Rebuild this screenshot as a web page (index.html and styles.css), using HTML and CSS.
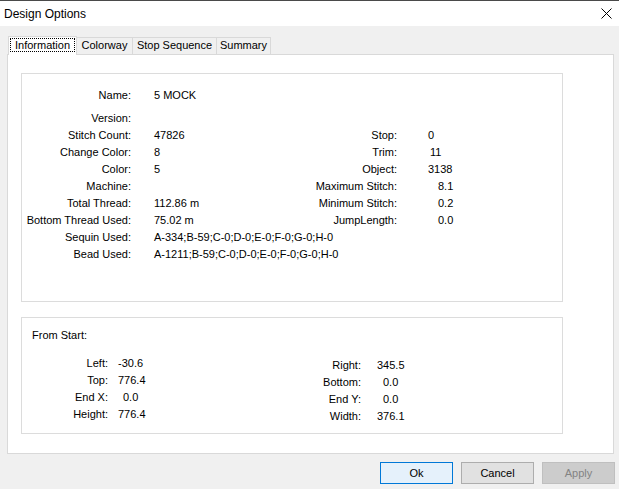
FILE: index.html
```html
<!DOCTYPE html>
<html lang="en">
<head>
    <meta charset="UTF-8">
    <title>Design Options</title>
    <link rel="stylesheet" href="styles.css">
</head>
<body>
    <div class="titlebar">
        <span class="title">Design Options</span>
        <svg class="close" width="11" height="11" viewBox="0 0 11 11">
            <path d="M0.5 0.5 L10.5 10.5 M10.5 0.5 L0.5 10.5" stroke="#000" stroke-width="1" fill="none"/>
        </svg>
    </div>

    <div class="dialog">
        <div class="tabs">
            <div class="tab active"><span class="focus">Information</span></div>
            <div class="tab w-colorway">Colorway</div>
            <div class="tab w-stop">Stop Sequence</div>
            <div class="tab w-summary">Summary</div>
        </div>

        <div class="panel">
            <div class="group info">
                <div class="info-grid">
                    <div class="lbl">Name:</div><div class="val">5 MOCK</div><div></div><div></div>
                    <div class="lbl">Version:</div><div class="val"></div><div></div><div></div>
                    <div class="lbl">Stitch Count:</div><div class="val">47826</div><div class="lbl">Stop:</div><div class="val2">0</div>
                    <div class="lbl">Change Color:</div><div class="val">8</div><div class="lbl">Trim:</div><div class="val2 shift1">11</div>
                    <div class="lbl">Color:</div><div class="val">5</div><div class="lbl">Object:</div><div class="val2">3138</div>
                    <div class="lbl">Machine:</div><div class="val"></div><div class="lbl">Maximum Stitch:</div><div class="val2 shift">8.1</div>
                    <div class="lbl">Total Thread:</div><div class="val">112.86 m</div><div class="lbl">Minimum Stitch:</div><div class="val2 shift">0.2</div>
                    <div class="lbl">Bottom Thread Used:</div><div class="val">75.02 m</div><div class="lbl">JumpLength:</div><div class="val2 shift">0.0</div>
                    <div class="lbl">Sequin Used:</div><div class="val wide">A-334;B-59;C-0;D-0;E-0;F-0;G-0;H-0</div>
                    <div class="lbl">Bead Used:</div><div class="val wide">A-1211;B-59;C-0;D-0;E-0;F-0;G-0;H-0</div>
                </div>
            </div>

            <div class="group start">
                <div class="group-head">From Start:</div>
                <div class="start-row">
                    <div class="pos-grid left">
                        <div class="lbl">Left:</div><div class="pv">-30.6</div>
                        <div class="lbl">Top:</div><div class="pv">776.4</div>
                        <div class="lbl">End X:</div><div class="pv zero">0.0</div>
                        <div class="lbl">Height:</div><div class="pv">776.4</div>
                    </div>
                    <div class="pos-grid right">
                        <div class="lbl">Right:</div><div class="pv">345.5</div>
                        <div class="lbl">Bottom:</div><div class="pv zero">0.0</div>
                        <div class="lbl">End Y:</div><div class="pv zero">0.0</div>
                        <div class="lbl">Width:</div><div class="pv">376.1</div>
                    </div>
                </div>
            </div>
        </div>

        <div class="buttons">
            <button class="btn ok">Ok</button>
            <button class="btn">Cancel</button>
            <button class="btn disabled">Apply</button>
        </div>
    </div>
</body>
</html>
```

FILE: styles.css
```css
body {
    margin: 0;
    background: #f0f0f0;
    font-family: "Liberation Sans", Arial, sans-serif;
    font-size: 11px;
    color: #000;
    width: 619px;
    height: 489px;
    overflow: hidden;
}

.titlebar {
    height: 25px;
    background: #fff;
    border-top: 1px solid #4a4a4a;
    display: flex;
    align-items: center;
    justify-content: space-between;
    padding: 0 7px 0 4px;
}

.title {
    font-size: 12px;
}

.close {
    display: block;
}

.dialog {
    padding: 9px 0 0 7px;
}

.tabs {
    display: flex;
    align-items: flex-end;
    padding-left: 1px;
    height: 19px;
}

.tab {
    box-sizing: border-box;
    height: 17px;
    line-height: 15px;
    text-align: center;
    border: 1px solid #d9d9d9;
    border-left: none;
    border-bottom: none;
    background: #f0f0f0;
}

.tab.active {
    width: 69px;
    height: 19px;
    border-left: 1px solid #d9d9d9;
    background: #fff;
    margin-bottom: -1px;
    position: relative;
    z-index: 1;
    padding-top: 1px;
}

.focus {
    display: inline-block;
    box-sizing: border-box;
    width: 65px;
    height: 14px;
    line-height: 12px;
    border: 1px dotted #000;
}

.w-colorway { width: 56px; }
.w-stop { width: 84px; }
.w-summary { width: 54px; }

.panel {
    box-sizing: border-box;
    width: 607px;
    height: 400px;
    background: #fff;
    border: 1px solid #d9d9d9;
    padding: 18px 0 0 13px;
}

.group {
    box-sizing: border-box;
    width: 542px;
    border: 1px solid #dcdcdc;
}

.info {
    height: 229px;
    padding-top: 13px;
}

.info-grid {
    display: grid;
    grid-template-columns: 109px 169px 97px auto;
    grid-template-rows: 23px repeat(9, 17px);
    line-height: 17px;
    align-items: start;
    white-space: nowrap;
}

.lbl {
    text-align: right;
}

.val {
    padding-left: 23px;
}

.val.wide {
    grid-column: 2 / -1;
}

.val2 {
    padding-left: 31px;
}

.val2.shift1 {
    padding-left: 33px;
}

.val2.shift {
    padding-left: 41px;
}

.start {
    height: 117px;
    margin-top: 15px;
    padding: 9px 0 0 10px;
}

.group-head {
    line-height: 17px;
}

.start-row {
    display: flex;
    margin-top: 11px;
    margin-left: -10px;
}

.pos-grid {
    display: grid;
    grid-auto-rows: 17px;
    line-height: 17px;
}

.pos-grid.left {
    width: 278px;
    grid-template-columns: 86px auto;
}

.pos-grid.right {
    grid-template-columns: 61px auto;
    margin-top: 2px;
}

.left .pv {
    padding-left: 10px;
}

.right .pv {
    padding-left: 16px;
}

.left .pv.zero {
    padding-left: 15px;
}

.right .pv.zero {
    padding-left: 22px;
}

.buttons {
    display: flex;
    justify-content: flex-end;
    gap: 8px;
    padding: 8px 4px 0 0;
}

.btn {
    box-sizing: border-box;
    width: 73px;
    height: 22px;
    padding: 0;
    font-family: "Liberation Sans", Arial, sans-serif;
    font-size: 11px;
    color: #000;
    background: #e1e1e1;
    border: 1px solid #adadad;
}

.btn.ok {
    background: #e5f1fb;
    border-color: #0078d7;
}

.btn.disabled {
    background: #cccccc;
    border-color: #bfbfbf;
    color: #838383;
}
```
